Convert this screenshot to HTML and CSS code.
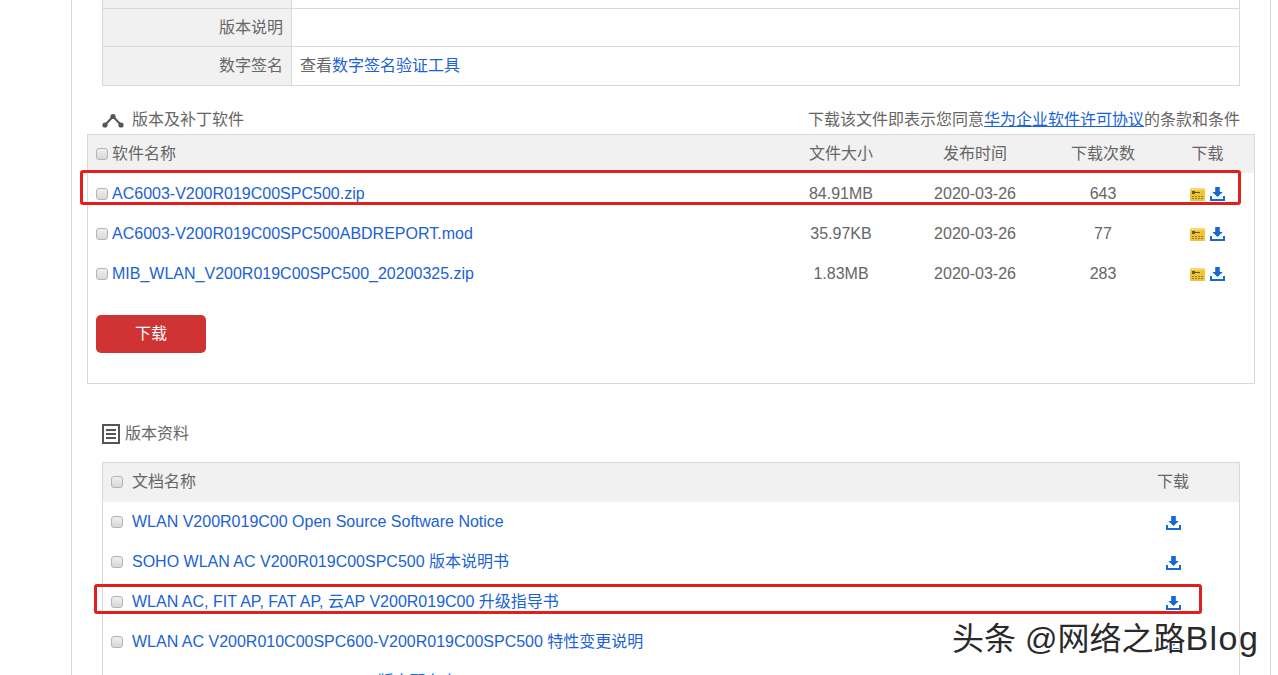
FILE: index.html
```html
<!DOCTYPE html>
<html lang="zh">
<head>
<meta charset="utf-8">
<title>版本及补丁软件</title>
<link rel="stylesheet" href="styles.css">
</head>
<body>
<svg class="defs" width="0" height="0" aria-hidden="true">
  <symbol id="dl" viewBox="0 0 15 14">
    <path d="M5.2 0h4.600v5h3L7.500 10 2.200 5h3z" fill="#1769d2"/>
    <path d="M0 9h2v3h11V9h2v5H0z" fill="#1769d2"/>
  </symbol>
  <symbol id="key" viewBox="0 0 15 13">
    <rect width="15" height="13" rx="1" fill="#eec53a"/>
    <rect x="0" y="0" width="15" height="2" fill="#f6dc78"/>
    <rect x="2" y="3" width="3" height="3" fill="#6b5a20"/>
    <rect x="5" y="4" width="5" height="1" fill="#6b5a20"/>
    <path d="M2 8.500h2M5 8.500h2M8 8.500h2M11 8.500h2M2 10.500h2M5 10.500h2M8 10.500h2M11 10.500h2" stroke="#937c24" stroke-width="1"/>
  </symbol>
</svg>
<main class="page">
  <section class="info">
    <div class="info-row stub"><div class="info-k"></div><div class="info-v"></div></div>
    <div class="info-row short"><div class="info-k">版本说明</div><div class="info-v"></div></div>
    <div class="info-row"><div class="info-k">数字签名</div><div class="info-v">查看<a href="#">数字签名验证工具</a></div></div>
  </section>

  <section class="soft-head">
    <h2 class="title">
      <svg class="ico-share" viewBox="0 0 22 15" width="22" height="15" aria-hidden="true">
        <path d="M3 12 11 3.500 19 12" fill="none" stroke="#555" stroke-width="2"/>
        <circle cx="3" cy="12" r="2.600" fill="#555"/><circle cx="11" cy="3.500" r="2.600" fill="#555"/><circle cx="19" cy="12" r="2.600" fill="#555"/>
      </svg>版本及补丁软件</h2>
    <p class="terms">下载该文件即表示您同意<a class="ul" href="#">华为企业软件许可协议</a>的条款和条件</p>
  </section>

  <section class="panel">
    <div class="soft-row hdr">
      <div class="name"><span class="cb"></span>软件名称</div><div>文件大小</div><div>发布时间</div><div>下载次数</div><div class="last">下载</div>
    </div>
    <div class="soft-row">
      <div class="name"><span class="cb"></span><a href="#">AC6003-V200R019C00SPC500.zip</a></div><div>84.91MB</div><div>2020-03-26</div><div>643</div>
      <div class="acts last"><svg class="i-key"><use href="#key"/></svg><svg class="i-dl"><use href="#dl"/></svg></div>
    </div>
    <div class="soft-row">
      <div class="name"><span class="cb"></span><a href="#">AC6003-V200R019C00SPC500ABDREPORT.mod</a></div><div>35.97KB</div><div>2020-03-26</div><div>77</div>
      <div class="acts last"><svg class="i-key"><use href="#key"/></svg><svg class="i-dl"><use href="#dl"/></svg></div>
    </div>
    <div class="soft-row">
      <div class="name"><span class="cb"></span><a href="#">MIB_WLAN_V200R019C00SPC500_20200325.zip</a></div><div>1.83MB</div><div>2020-03-26</div><div>283</div>
      <div class="acts last"><svg class="i-key"><use href="#key"/></svg><svg class="i-dl"><use href="#dl"/></svg></div>
    </div>
    <button class="btn" type="button">下载</button>
  </section>

  <h2 class="title doc-title">
    <svg class="ico-doc" viewBox="0 0 18 20" width="18" height="20" aria-hidden="true">
      <rect x="1" y="1" width="16" height="18" fill="none" stroke="#555" stroke-width="2"/>
      <path d="M4 6h10M4 10h10M4 14h10" stroke="#555" stroke-width="2"/>
    </svg>版本资料</h2>

  <section class="docs">
    <div class="doc-row hdr"><div class="name"><span class="cb"></span>文档名称</div><div>下载</div></div>
    <div class="doc-row"><div class="name"><span class="cb"></span><a href="#">WLAN V200R019C00 Open Source Software Notice</a></div><div class="acts"><svg class="i-dl"><use href="#dl"/></svg></div></div>
    <div class="doc-row"><div class="name"><span class="cb"></span><a href="#">SOHO WLAN AC V200R019C00SPC500 版本说明书</a></div><div class="acts"><svg class="i-dl"><use href="#dl"/></svg></div></div>
    <div class="doc-row"><div class="name"><span class="cb"></span><a href="#">WLAN AC, FIT AP, FAT AP, 云AP V200R019C00 升级指导书</a></div><div class="acts"><svg class="i-dl"><use href="#dl"/></svg></div></div>
    <div class="doc-row"><div class="name"><span class="cb"></span><a href="#">WLAN AC V200R010C00SPC600-V200R019C00SPC500 特性变更说明</a></div><div class="acts"><svg class="i-dl"><use href="#dl"/></svg></div></div>
    <div class="doc-row"><div class="name"><span class="cb"></span><a href="#">WLAN AC V200R019C00SPC500 版本配套表</a></div><div class="acts"><svg class="i-dl"><use href="#dl"/></svg></div></div>
  </section>
</main>

<div class="mark mark-a"></div>
<div class="mark mark-b"></div>
<div class="wm">头条 @网络之路<span class="wm-en">Blog</span></div>
</body>
</html>
```

FILE: styles.css
```css
* { box-sizing: border-box; }
html, body { margin: 0; height: 675px; overflow: hidden; background: #fff; }
body {
  font-family: "Liberation Sans", "Noto Sans CJK SC", sans-serif;
  font-size: 16px;
  line-height: 20px;
  color: #666;
  position: relative;
}
a { color: #1a62d6; text-decoration: none; }
a.ul { text-decoration: underline; }
.defs { position: absolute; }

.page {
  margin-left: 71px;
  width: 1200px;
  height: 675px;
  overflow: hidden;
  border-left: 1px solid #d9d9d9;
  border-right: 1px solid #d9d9d9;
  padding: 0 15px;
}

.info { margin: 0 15px; width: 1138px; border: 1px solid #d9d9d9; border-top: 0; }
.info-row { display: flex; height: 39px; border-top: 1px solid #d9d9d9; }
.info-row.short { height: 38px; }
.info-row.stub { height: 8px; border-top: 0; }
.info-k {
  width: 189px;
  background: #f1f1f1;
  border-right: 1px solid #d9d9d9;
  text-align: right;
  padding-right: 8px;
  line-height: 37px;
}
.info-v { flex: 1; padding-left: 8px; line-height: 37px; }

.soft-head {
  display: flex;
  justify-content: space-between;
  align-items: center;
  height: 48px;
  padding: 20px 15px 0;
}
.title { display: flex; align-items: center; margin: 0; font-size: 16px; font-weight: 400; color: #666; }
.ico-share { margin-right: 8px; }
.terms { margin: 0; }

.panel {
  height: 250px;
  border: 1px solid #d9d9d9;
}
.soft-row {
  display: grid;
  grid-template-columns: 698px 110px 158px 98px 1fr;
  height: 40px;
  padding-top: 2px;
  align-items: center;
  text-align: center;
}
.soft-row .last { padding-left: 9px; }
.soft-row.hdr { height: 38px; padding-top: 0; background: #f1f1f1; }
.name { display: flex; align-items: center; text-align: left; padding-left: 8px; }
.cb {
  flex: none;
  width: 12px;
  height: 12px;
  margin-right: 4px;
  border: 1px solid #b4b4b4;
  border-radius: 3px;
  background: linear-gradient(#efefef, #d8d8d8);
}
.acts { display: flex; justify-content: center; align-items: center; gap: 5px; padding-top: 2px; }
.soft-row .acts { padding-top: 0; }
.i-key { width: 15px; height: 13px; }
.i-dl { width: 15px; height: 14px; }

.btn {
  display: block;
  width: 110px;
  height: 38px;
  margin: 22px 0 0 8px;
  padding: 0;
  border: 0;
  border-radius: 5px;
  background: #cf3333;
  color: #fff;
  font: inherit;
}

.doc-title { height: 20px; margin: 40px 15px 0; }
.ico-doc { margin-right: 5px; }

.docs { margin: 18px 15px 0; width: 1138px; border: 1px solid #d9d9d9; }
.doc-row {
  display: grid;
  grid-template-columns: 1fr 132px;
  height: 40px;
  align-items: center;
}
.doc-row > div:last-child { text-align: center; }
.doc-row.hdr { height: 39px; padding-bottom: 2px; background: #f1f1f1; }
.doc-row .cb { margin-right: 9px; }

.mark { position: absolute; border: 3px solid #e0201c; border-radius: 3px; }
.mark-a { left: 80px; top: 170px; width: 1161px; height: 35px; }
.mark-b { left: 94px; top: 584px; width: 1108px; height: 30px; }

.wm {
  position: absolute;
  left: 952px;
  top: 618px;
  font-size: 32px;
  line-height: 40px;
  color: #2a2a2a;
  white-space: nowrap;
  text-shadow: 1px 1px 0 #fff, -1px -1px 0 #fff;
}
.wm-en { font-size: 34px; letter-spacing: 1.500px; }
```
